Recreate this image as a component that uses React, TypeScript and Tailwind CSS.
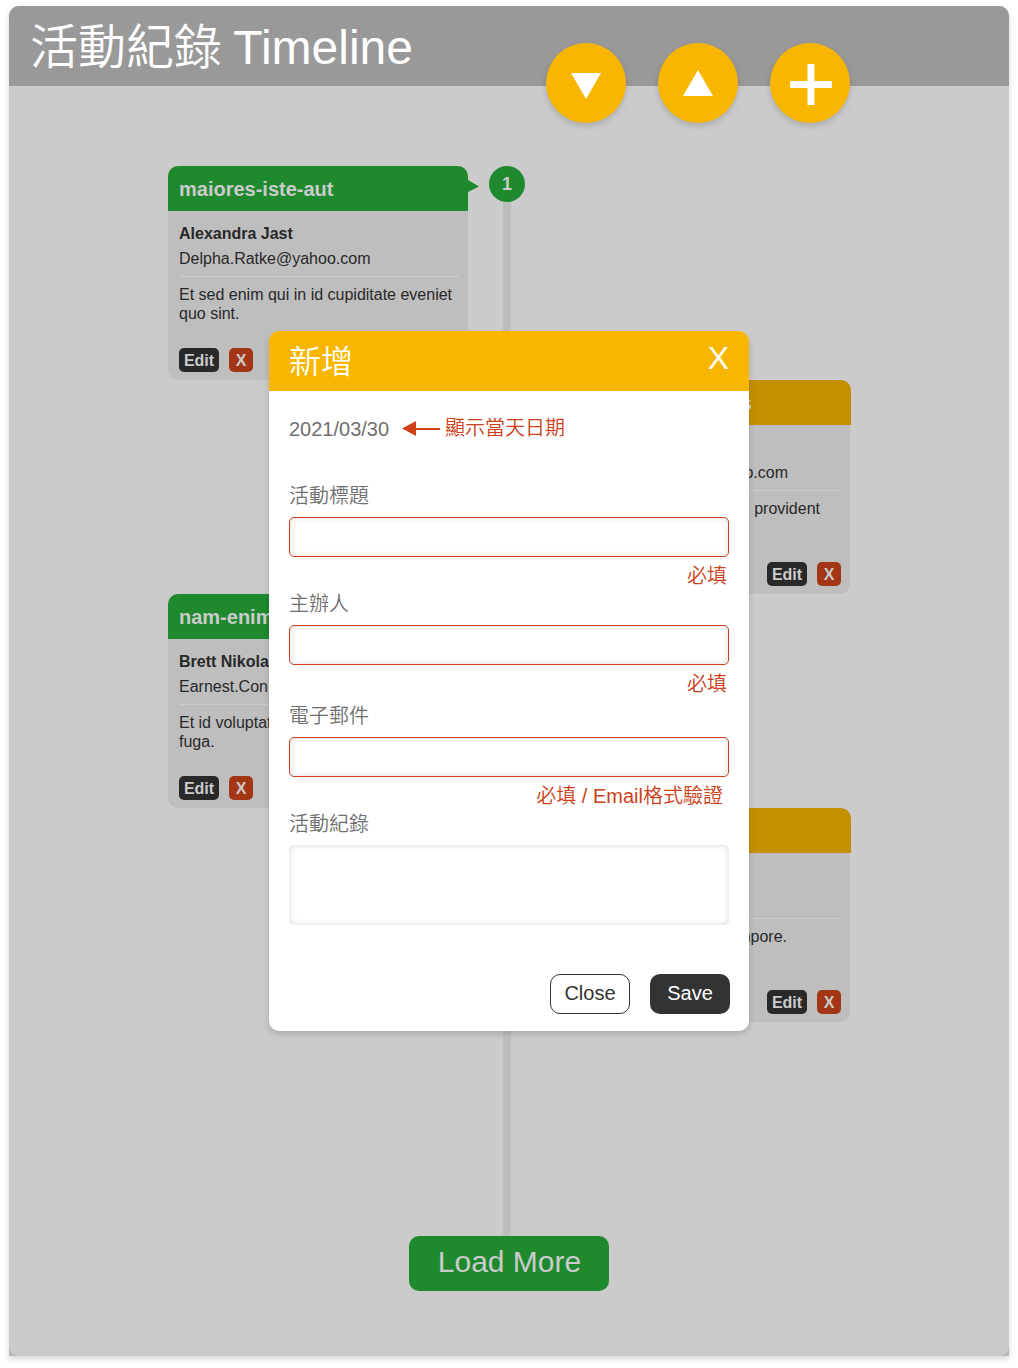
import type { ReactNode } from "react";

type CardData = {
  side: "left" | "right";
  title: ReactNode;
  name: string;
  email: ReactNode;
  body: ReactNode;
};

const cards: CardData[] = [
  {
    side: "left",
    title: "maiores-iste-aut",
    name: "Alexandra Jast",
    email: "Delpha.Ratke@yahoo.com",
    body: (
      <>
        Et sed enim qui in id cupiditate eveniet
        <br />
        quo sint.
      </>
    ),
  },
  {
    side: "right",
    title: <span className="block w-[191px] text-right">voluptatibus</span>,
    name: "",
    email: <span className="block w-[227px] text-right">@yahoo.com</span>,
    body: <span className="block w-[259px] text-right">provident</span>,
  },
  {
    side: "left",
    title: "nam-enim",
    name: "Brett Nikola",
    email: "Earnest.Con",
    body: (
      <>
        Et id voluptat
        <br />
        fuga.
      </>
    ),
  },
  {
    side: "right",
    title: "",
    name: "",
    email: "",
    body: <span className="block w-[226px] text-right">tempore.</span>,
  },
];

function Card({ side, title, name, email, body }: CardData) {
  const left = side === "left";
  return (
    <article
      className={
        left
          ? "relative h-[214px] w-[300px] rounded-[10px] bg-[#bebebe]"
          : "relative ml-[382px] h-[214px] w-[300px] rounded-[10px] bg-[#bebebe]"
      }
    >
      <h2
        className={
          left
            ? "h-[45px] rounded-t-[10px] bg-[#1e8a2d] px-[11px] text-[20px] leading-[47px] font-bold text-[#cbcbcb]"
            : "h-[45px] w-[301px] rounded-t-[10px] bg-[#c49000] px-[11px] text-[20px] leading-[47px] font-bold text-[#cbcbcb]"
        }
      >
        {title}
      </h2>
      {left && (
        <svg className="absolute top-[14px] left-[300px] h-3 w-[11px]" viewBox="0 0 11 12">
          <path d="M0 0 11 6.5 0 12Z" fill="#1e8a2d" />
        </svg>
      )}
      <div className="px-[11px] pt-[13px] text-[16px] text-[#292929]">
        <p className="h-5 leading-5 font-bold whitespace-nowrap">{name}</p>
        <p className="mt-[5px] h-5 leading-5 whitespace-nowrap">{email}</p>
        <hr className="mt-[7px] w-[280px] border-[#cdcdcd]" />
        <p className="mt-[8px] h-[38px] leading-[19px] whitespace-nowrap">{body}</p>
      </div>
      <div
        className={
          left
            ? "mt-[25px] flex gap-[10px] px-[11px]"
            : "mt-[25px] flex justify-end gap-[10px] px-[9px]"
        }
      >
        <button className="h-6 w-10 rounded-[5px] bg-[#292929] text-[16px] leading-[25px] font-bold text-[#cbcbcb]">Edit</button>
        <button className="h-6 w-6 rounded-[5px] bg-[#a33715] text-[16px] leading-[25px] font-bold text-[#cbcbcb]">X</button>
      </div>
    </article>
  );
}

function RoundButton({ label, children }: { label: string; children: ReactNode }) {
  return (
    <button
      aria-label={label}
      className="h-20 w-20 rounded-full bg-[#f8b600] shadow-[0_3px_6px_rgba(0,0,0,0.16)]"
    >
      <svg className="h-20 w-20" viewBox="0 0 80 80" fill="#fff">
        {children}
      </svg>
    </button>
  );
}

function Field({ label, error, className }: { label: string; error: ReactNode; className: string }) {
  return (
    <div className={className}>
      <label className="block h-6 leading-[26px]">{label}</label>
      <input
        aria-label={label}
        className="mt-[10px] block h-10 w-full rounded-[5px] border border-[#cc4119] bg-white shadow-[inset_0_0_6px_rgba(0,0,0,0.12)]"
      />
      <div className="mt-[6px] h-6 text-right leading-[26px] text-[#cc4119]">{error}</div>
    </div>
  );
}

function Modal() {
  return (
    <section className="absolute top-[325px] left-[260px] flex h-[700px] w-[480px] flex-col overflow-hidden rounded-[10px] bg-white shadow-[0_3px_6px_rgba(0,0,0,0.16)]">
      <header className="flex h-[60px] shrink-0 justify-between bg-[#f8b600] px-5 text-[32px] text-white">
        <h2 className="leading-[63px] font-[350]">新增</h2>
        <button className="h-[54px] leading-[54px]">X</button>
      </header>
      <div className="px-5 text-[20px] font-[350] text-[#707070]">
        <div className="mt-6 flex h-7 items-center">
          <time className="leading-7">2021/03/30</time>
          <svg className="ml-[13px] h-4 w-[38px]" viewBox="0 0 38 16">
            <path d="M0 7.500 14 0v15Z" fill="#cc4119" />
            <path d="M13 8h25" stroke="#cc4119" strokeWidth="2" />
          </svg>
          <span className="mb-[2px] ml-[5px] leading-7 text-[#cc4119]">顯示當天日期</span>
        </div>
        <Field className="mt-[40px]" label="活動標題" error={<span className="mr-[2px]">必填</span>} />
        <Field className="mt-1" label="主辦人" error={<span className="mr-[2px]">必填</span>} />
        <Field className="mt-2" label="電子郵件" error={<span className="mr-[6px]">必填 / Email格式驗證</span>} />
        <label className="mt-1 block h-6 leading-[26px]">活動紀錄</label>
        <textarea
          aria-label="活動紀錄"
          className="mt-[10px] block h-20 w-full resize-none rounded-[5px] bg-white shadow-[inset_0_0_6px_rgba(0,0,0,0.16)]"
        />
      </div>
      <footer className="mt-[49px] mr-[19px] flex justify-end gap-5 text-[20px]">
        <button className="h-10 w-20 rounded-[10px] border border-[#333] bg-white pb-[2px] text-[#333]">Close</button>
        <button className="h-10 w-20 rounded-[10px] bg-[#333] pb-[2px] text-white">Save</button>
      </footer>
    </section>
  );
}

export default function App() {
  return (
    <div className="h-[1368px] overflow-hidden bg-white pt-[6px] pl-[9px] font-['Liberation_Sans','Noto_Sans_CJK_TC',sans-serif]">
      <main className="relative h-[1350px] w-[1000px] rounded-t-[10px] bg-[#b7b7b7] shadow-[0_3px_6px_rgba(0,0,0,0.16)]">
        <div className="h-full rounded-[10px] bg-[#cbcbcb]">
          <header className="flex h-20 rounded-t-[10px] bg-[#999]">
            <h1 className="w-[537px] pl-[21px] text-[48px] leading-[84px] font-[350] whitespace-nowrap text-white">
              活動紀錄<span className="-ml-[2px]"> Timeline</span>
            </h1>
            <nav className="mt-[37px] flex h-20 gap-8">
              <RoundButton label="往下">
                <path d="M25 30h30L40 56Z" />
              </RoundButton>
              <RoundButton label="往上">
                <path d="M40 27 55 53H25Z" />
              </RoundButton>
              <RoundButton label="新增">
                <path d="M37.5 21h7v17h17.300v7H44.500v17h-7V45H20.200v-7h17.300Z" />
              </RoundButton>
            </nav>
          </header>
          <div className="relative mt-20 ml-[159px] h-[1070px] w-[682px]">
            <div className="absolute top-0 left-[321px] flex h-full w-9 flex-col items-center">
              <span className="h-9 w-9 shrink-0 rounded-full bg-[#1e8a2d] text-center text-[18px] leading-9 font-bold text-[#cbcbcb]">
                1
              </span>
              <div className="w-2 grow bg-[#bebebe]" />
            </div>
            {cards.map((card, i) => (
              <Card key={i} {...card} />
            ))}
          </div>
          <button className="mx-auto block h-[55px] w-[200px] rounded-[10px] bg-[#1e8a2d] pb-1 pl-[1px] text-[30px] leading-[50px] text-[#cbcbcb]">
            Load More
          </button>
        </div>
        <Modal />
      </main>
    </div>
  );
}
